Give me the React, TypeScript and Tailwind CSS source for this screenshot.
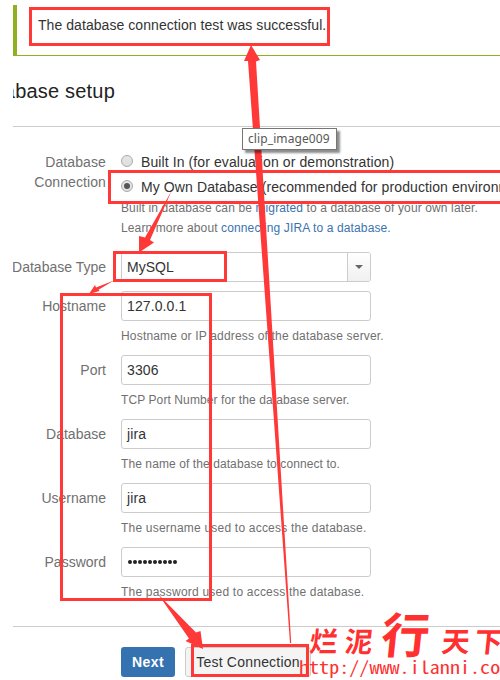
import React from "react";

const RED = "#ff3838";

function Row({ label, children, className = "" }: { label: React.ReactNode; children: React.ReactNode; className?: string }) {
  return (
    <div className={`flex gap-[15px] ${className}`}>
      <div className="flex w-[93px] shrink-0 justify-end overflow-hidden whitespace-nowrap pt-[5px] text-right leading-5 text-[#707070]">
        {label}
      </div>
      <div className="shrink-0">{children}</div>
    </div>
  );
}

function Radio({ checked = false }: { checked?: boolean }) {
  return (
    <span className="-mt-0.5 flex size-3 shrink-0 items-center justify-center rounded-full border border-[#a9a9a9] bg-gradient-to-b from-[#e6e6e6] to-[#dedede]">
      {checked && <span className="size-1.5 rounded-full bg-[#555]" />}
    </span>
  );
}

function Field({ label, value, help, helpClass, dots = false }: { label: string; value: string; help: string; helpClass: string; dots?: boolean }) {
  return (
    <Row label={label} className="h-16">
      <div className="flex h-[30px] w-[250px] items-center rounded-[3px] border border-[#ccc] bg-white pl-[5px] tracking-[0.1px] text-[#333]">
        {dots ? (
          <span className="flex gap-px pl-px">
            {value.split("").map((_, i) => (
              <span key={i} className="size-1 rounded-full bg-[#222]" />
            ))}
          </span>
        ) : (
          value
        )}
      </div>
      <p className={`mt-[5px] whitespace-nowrap text-xs leading-5 text-[#707070] ${helpClass}`}>{help}</p>
    </Row>
  );
}

export default function App() {
  return (
    <div className="relative h-[680px] w-[500px] overflow-hidden bg-white pl-[13px] pt-[5px] font-['Liberation_Sans',Arial,sans-serif] text-sm text-[#333]">
      <div className="flex h-[51px]">
        <div className="w-1 shrink-0 bg-[#8eb021]" />
        <div className="flex-1 border-b border-b-[#8eb021] pl-[21px] pt-[10px] leading-5 tracking-[0.06px]">
          The database connection test was successful.
        </div>
      </div>
      <div className="mt-[20px] flex h-[30px] w-[102px] justify-end overflow-hidden whitespace-nowrap text-xl leading-[30px] tracking-[0.2px] text-[#222]">
        abase setup
      </div>
      <div className="mt-[20px] border-b border-[#ccc]" />

      <div className="mt-5 flex h-[105px] gap-[15px]">
        <div className="w-[93px] shrink-0 pt-[5px] text-right leading-5 tracking-[0.1px] text-[#707070]">
          Database
          <br />
          Connection
        </div>
        <div className="shrink-0 whitespace-nowrap pt-[5px]">
          <div className="flex h-5 items-center gap-2 tracking-[0.1px]">
            <Radio />
            Built In (for evaluation or demonstration)
          </div>
          <div className="mt-[5px] flex h-5 items-center gap-2 tracking-[0.1px]">
            <Radio checked />
            My Own Database (recommended for production environments)
          </div>
          <p className="mt-px text-xs leading-5 tracking-[0.12px] text-[#707070]">
            Built in database can be <span className="text-[#3b73af]">migrated</span> to a database of your own later.
            <br />
            Learn more about <span className="text-[#3b73af]">connecting JIRA to a database.</span>
          </p>
        </div>
      </div>

      <Row label="Database Type" className="h-[39px]">
        <div className="flex h-[30px] w-[250px] overflow-hidden rounded-[3px] border border-[#ccc]">
          <span className="flex flex-1 items-center pl-[5px]">MySQL</span>
          <span className="flex w-[23px] items-center justify-center border-l border-[#ccc] bg-gradient-to-b from-white to-[#f0f0f0]">
            <svg width="8" height="4" viewBox="0 0 8 4">
              <path d="M0 0h8L4 4z" fill="#666" />
            </svg>
          </span>
        </div>
      </Row>
      <Field label="Hostname" value="127.0.0.1" help="Hostname or IP address of the database server." helpClass="tracking-[0.18px]" />
      <Field label="Port" value="3306" help="TCP Port Number for the database server." helpClass="tracking-[0.1px]" />
      <Field label="Database" value="jira" help="The name of the database to connect to." helpClass="tracking-[0.09px]" />
      <Field label="Username" value="jira" help="The username used to access the database." helpClass="tracking-[0.21px]" />
      <Field label="Password" value="••••••••••" help="The password used to access the database." helpClass="tracking-[0.21px]" dots />

      <div className="mt-[15px] border-b border-[#ccc]" />
      <div className="ml-[108px] mt-5 flex gap-[10px]">
        <button className="h-[30px] w-[54px] rounded-[3px] bg-[#3572b0] font-bold tracking-[0.4px] text-white">Next</button>
        <button className="h-[30px] w-[126px] whitespace-nowrap rounded-[3px] border border-[#ccc] bg-[#f4f4f4] tracking-[0.2px]">Test Connection</button>
      </div>

      <svg className="absolute inset-0" width="500" height="680" viewBox="0 0 500 680">
        <g fill="none" stroke={RED} strokeWidth="3">
          <rect x="30.5" y="8.5" width="298" height="36" />
          <rect x="109.5" y="171.5" width="400" height="31" />
          <rect x="114.5" y="252.5" width="111" height="28" />
          <rect x="61.5" y="294.5" width="149" height="305" />
          <rect x="192.5" y="645.5" width="115" height="30" />
        </g>
        <g fill={RED}>
          <path d="M251 45L260 60L256 61.5L291.2 643H290L248 61L244 61Z" />
          <path d="M171.5 191L145 237.5L139 236V252.5L154 242.5L150 240Z" />
          <path d="M114 280.5L96 287.5L95 285L89 294L99.5 291L98.5 289.8Z" />
          <path d="M158 594L189 638.5L185.5 641L203 649L200.5 631L196 632.5Z" />
        </g>
      </svg>

      <div className="absolute left-[242px] top-[128px] flex h-[22px] w-[95px] items-center border border-[#767676] bg-white pl-[5px] font-['Noto_Sans',sans-serif] text-xs tracking-[0.1px] text-[#575757] shadow-[3px_3px_2px_rgba(0,0,0,0.45)]">
        clip_image009
      </div>

      <div className="absolute left-[310px] top-[606px] flex h-[52px] items-center whitespace-nowrap font-['Noto_Sans_CJK_SC',sans-serif] font-bold leading-none text-[#ff3030]">
        <span className="mt-[15px] -skew-x-6 text-[28px]">烂</span>
        <span className="ml-[7px] mt-[15px] -skew-x-6 text-[28px]">泥</span>
        <span className="ml-[9px] -skew-x-6 text-[48px]">行</span>
        <span className="ml-[12px] mt-[15px] -skew-x-6 text-[28px]">天</span>
        <span className="ml-[5px] mt-[15px] -skew-x-6 text-[28px]">下</span>
      </div>
      <div className="absolute left-[299px] top-[655px] origin-center scale-y-[0.86] whitespace-nowrap font-['Noto_Sans_CJK_SC',sans-serif] text-[20px] leading-6 tracking-[0.06px] text-[#ff3030] [font-feature-settings:'hwid']">
        http://www.ilanni.com
      </div>
    </div>
  );
}
